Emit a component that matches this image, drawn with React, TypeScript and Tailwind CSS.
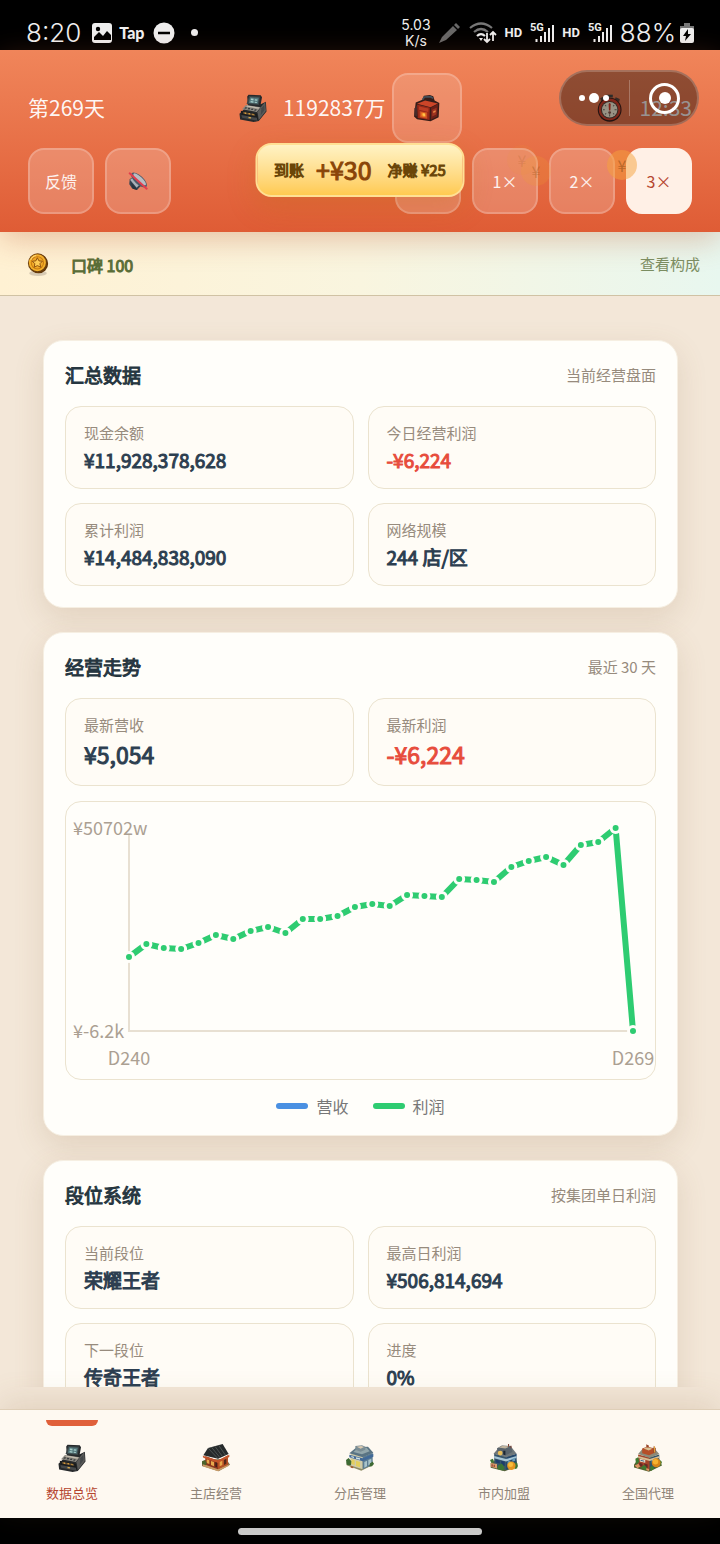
import React from "react";

interface IconProps {
  className?: string;
}

interface StatProps {
  label: string;
  value: string;
  negative?: boolean;
  large?: boolean;
}

const RegisterIcon = ({ className }: IconProps) => (
  <svg viewBox="0 0 84 87" className={className} aria-hidden="true">
    <path d="M24 8l4-6 38 2 4 6-4 22 16-8 2 30-24 30-16 3-42-8-2-18 14-14 12-10z" fill="#26292b" />
    <path d="M30 6l34 2-4 26-38-3z" fill="#3b4648" />
    <path d="M33 10l27 2-3 18-28-2z" fill="#54777c" />
    <path d="M36 14l8 1-1 5-8-1zM48 16l8 1-1 4-8-1zM35 22l9 1-1 4-9-1zM48 24l6 1v3l-7-1z" fill="#a9d0cb" />
    <path d="M20 34l46 7-12 15-46-9z" fill="#8d8980" />
    <path d="M24 36l38 6-3 4-38-7z" fill="#c5beb0" />
    <path d="M18 41l6 1-3 4-6-1zM28 43l6 1-3 4-6-1zM38 45l6 1-3 4-6-1zM48 47l6 1-3 4-6-1z" fill="#34383a" />
    <path d="M66 41l14-16 2 28-22 28-4-24z" fill="#5c5c5a" />
    <path d="M68 44l9-10 1 16-12 16z" fill="#44484a" />
    <path d="M4 52l50 9 4 20-50-8z" fill="#1a1c1d" />
    <path d="M10 55l38 7 1 6-37-7z" fill="#5c4a31" />
    <path d="M16 57l5 1v4l-5-1zM28 59l5 1v4l-5-1zM40 61l4 1v4l-4-1z" fill="#e0a23e" />
    <path d="M6 65l48 9 2 9-48-9z" fill="#45484a" />
    <path d="M28 71l8 1v4l-8-1z" fill="#d6a94b" />
  </svg>
);

const BagIcon = ({ className }: IconProps) => (
  <svg viewBox="0 0 80 80" className={className} aria-hidden="true">
    <path d="M8 22l20-8 4-12 18-2 10 4 4 12 14 8-2 42-24 12-40-6-9-8z" fill="#351c18" />
    <path d="M28 14l6-8 18-1 8 5" fill="none" stroke="#44505a" strokeWidth="5" />
    <path d="M12 26l24-10 38 9-22 11z" fill="#cc4528" />
    <path d="M12 28l38 9-1 37-35-6z" fill="#962818" />
    <path d="M53 38l21-11-2 37-19 9z" fill="#6c2018" />
    <path d="M18 34l28 6-1 10-27-6z" fill="#bd3d24" />
    <path d="M20 48l22 4v18l-22-4z" fill="#cf5222" />
    <path d="M25 52l12 2v11l-12-2z" fill="#f58a25" />
    <path d="M28 56l5-3 4 7-5 4z" fill="#ffc64f" />
    <path d="M57 44l13-6-1 20-12 6z" fill="#9f3321" />
    <path d="M60 48l7-3v5l-7 3z" fill="#e98645" />
    <path d="M4 40l8-10v34l-8-4z" fill="#462b2a" />
  </svg>
);

const StopwatchIcon = ({ className }: IconProps) => (
  <svg viewBox="0 0 80 80" className={className} aria-hidden="true">
    <path d="M30 2h18v8H30z" fill="#4a4a46" />
    <path d="M12 12l10-5 6 6-12 9zM56 9l12 5-2 9-12-7z" fill="#5a4640" />
    <circle cx="39" cy="45" r="34" fill="#38201c" />
    <circle cx="39" cy="44" r="31" fill="#d8402c" />
    <circle cx="39" cy="45" r="25" fill="#5a453c" />
    <circle cx="39" cy="45" r="22" fill="#fdf3dd" />
    <path d="M39 26v5M39 58v6M20 45h5M53 45h6M26 32l3 3M52 32l-3 3M26 58l3-3M52 58l-3-3" stroke="#77706a" strokeWidth="3" />
    <path d="M36 28h6l-1 19h-4z" fill="#e03626" />
    <circle cx="39" cy="53" r="4" fill="#8a5a50" />
  </svg>
);

const MutedIcon = ({ className }: IconProps) => (
  <svg viewBox="0 0 60 60" className={className} aria-hidden="true">
    <path d="M5 24l10-4 26 22-14 15-15-5-8-12z" fill="#35424f" />
    <path d="M6 26l8-5 20 20-8 9z" fill="#a9b1b8" />
    <path d="M9 35l15 15 5 7-15-4z" fill="#28343f" />
    <ellipse cx="33" cy="27" rx="30" ry="13" transform="rotate(43 33 27)" fill="#4f5b69" />
    <ellipse cx="35" cy="25" rx="25" ry="8" transform="rotate(43 35 25)" fill="#b9bdc3" />
    <path d="M5 7l51 46" stroke="#e33d4d" strokeWidth="6" strokeLinecap="round" />
  </svg>
);

const CoinIcon = ({ className }: IconProps) => (
  <svg viewBox="0 0 66 76" className={className} aria-hidden="true">
    <ellipse cx="33" cy="64" rx="28" ry="9" fill="#b7a997" opacity=".55" />
    <circle cx="35" cy="34" r="30" fill="#5c340b" />
    <circle cx="32" cy="32" r="31" fill="#6b3f0d" />
    <circle cx="31" cy="31" r="27" fill="#f5b32c" />
    <circle cx="31" cy="31" r="21" fill="#c97b12" />
    <circle cx="31" cy="31" r="18" fill="#f0aa28" />
    <path d="M31 15l5 10 11 1-8 8 3 11-11-5-10 5 2-11-8-8 11-1z" fill="#ffce55" stroke="#8c4d0c" strokeWidth="3" />
    <path d="M10 22c3-8 9-13 17-14" fill="none" stroke="#ffe28a" strokeWidth="3" />
  </svg>
);

const MainShopIcon = ({ className }: IconProps) => (
  <svg viewBox="0 0 84 84" className={className} aria-hidden="true">
    <path d="M0 60l10-12 62-4 12 18-34 20-50-16z" fill="#7c6a45" />
    <path d="M4 58l46 16 30-13v5L48 82 2 67z" fill="#c99c68" />
    <path d="M10 36l38 14v26L10 62z" fill="#8c351c" />
    <path d="M48 50l30-16v28L48 76z" fill="#b65024" />
    <path d="M4 34l14-22 44-12 18 30-32 14z" fill="#262a2b" />
    <path d="M18 12l30 32M28 9l26 32M39 7l22 30M50 4l20 29" stroke="#4e5452" strokeWidth="3" />
    <path d="M2 35l46 14 34-17v7L48 57 4 41z" fill="#c4552a" />
    <path d="M14 46l8 3v11l-8-3zM27 51l9 3v13l-9-4zM53 54l8-4v13l-8 4z" fill="#e8a94c" />
    <path d="M66 48l7-4v15l-7 4z" fill="#54281b" />
    <path d="M40 54l5 2v14l-5-2z" fill="#43211a" />
    <path d="M0 52l8-4 6 8-2 8-12-4z" fill="#4c642b" />
  </svg>
);

const BranchIcon = ({ className }: IconProps) => (
  <svg viewBox="0 0 84 80" className={className} aria-hidden="true">
    <path d="M2 52l20-8 56 2 4 14-36 18L2 62z" fill="#8d8c66" />
    <path d="M14 26l36 10v38L12 62z" fill="#d0cba8" />
    <path d="M50 36l30-12v36L50 74z" fill="#5c7d94" />
    <path d="M10 26l22-18 34-2 16 18-32 14z" fill="#5a7483" />
    <path d="M22 22l14-12 26-1 9 11-23 9z" fill="#93a7ab" />
    <path d="M28 4l20-2 10 4v9l-14 6-16-6z" fill="#7a8d94" />
    <path d="M32 6l14-2 8 3-10 5z" fill="#d9c9b1" />
    <path d="M10 30l40 11 32-14v9L50 50 10 38z" fill="#426a98" />
    <path d="M16 34l8 2v4l-8-2zM30 38l12 3v4l-12-3z" fill="#cfe2e8" />
    <path d="M16 44l10 3v14l-10-3zM30 48l12 4v16l-12-4z" fill="#e3cf5c" />
    <path d="M55 52l8-4v17l-8 4zM67 46l9-4v16l-9 4z" fill="#a9c4ca" />
    <path d="M0 46l8-6 8 10-1 12-13-2zM72 56l8-5 4 6-6 8-8 1z" fill="#3e6a33" />
    <path d="M14 64l8 2v5l-8-2z" fill="#a95b2a" />
  </svg>
);

const CityIcon = ({ className }: IconProps) => (
  <svg viewBox="0 0 80 80" className={className} aria-hidden="true">
    <path d="M2 54l16-8 56-4 6 22-38 14L2 68z" fill="#54603b" />
    <path d="M12 28l34 8v38L12 64z" fill="#38566a" />
    <path d="M46 36l30-8v34L46 74z" fill="#24476b" />
    <path d="M10 28l14-16 38-2 14 18-30 10z" fill="#6f777a" />
    <path d="M20 12l14-8 26 2 4 17-20 9-22-6z" fill="#59646c" />
    <path d="M24 10l12-5 20 2-12 6z" fill="#c1b49c" />
    <path d="M53 8V0M60 12V5" stroke="#7c3e30" strokeWidth="3" />
    <circle cx="29" cy="26" r="7" fill="#e7bd59" />
    <path d="M38 19h6v13l-6-2z" fill="#1b2633" />
    <path d="M12 34l34 9 30-9v6l-30 10-34-9z" fill="#a7c6d6" />
    <path d="M16 44l12 3v9l-12-3zM32 48l10 3v12l-10-3z" fill="#1d3c6d" />
    <path d="M50 50l8-3v11l-8 3zM64 42l8-3v9l-8 3z" fill="#659ab6" />
    <path d="M2 54l18 3v13L2 65z" fill="#da9d6e" />
    <path d="M6 58v7M12 59v7" stroke="#88372d" strokeWidth="3" />
    <path d="M22 62l12-6 8 12-5 8-15-4zM0 46l8-4 4 8-8 4zM70 52l8 3v14l-8 3z" fill="#3c7635" />
    <circle cx="61" cy="62" r="12" fill="#e39420" />
    <circle cx="59" cy="59" r="7" fill="#f8bd3c" />
  </svg>
);

const NationIcon = ({ className }: IconProps) => (
  <svg viewBox="0 0 82 80" className={className} aria-hidden="true">
    <path d="M0 60l14-20 56-4 12 26-38 18L0 68z" fill="#54612f" />
    <path d="M12 30l34 8v38L12 64z" fill="#a4432a" />
    <path d="M46 38l28-8v32L46 76z" fill="#31546a" />
    <path d="M12 28l14-16 32-2 16 18-28 12z" fill="#8b8a79" />
    <path d="M24 12l16-6 18 6v14l-14 6-20-6z" fill="#b54e28" />
    <path d="M28 12l12-4 14 5-11 5z" fill="#d9c194" />
    <path d="M36 0l8 4-2 6-6-2zM58 4l6 8-2 14-6-2z" fill="#974325" />
    <path d="M60 6v18" stroke="#e3a13b" strokeWidth="3" />
    <path d="M12 34l34 9 28-9v6l-28 9-34-9z" fill="#d6bd92" />
    <path d="M17 42l16 4v8l-16-4z" fill="#f0e3cd" />
    <path d="M19 45l11 3v3l-11-3z" fill="#3d6680" />
    <path d="M16 54l9 3v9l-9-3zM30 56l10 3v11l-10-3z" fill="#662a24" />
    <path d="M52 46l7-2v7l-7 2z" fill="#9bbac1" />
    <path d="M4 42l8-4 4 14-10 6zM20 68l10-8 8 8-4 8zM46 68l8-6 6 9-10 7zM74 44l8 8-4 10-6-4z" fill="#3f7a31" />
    <path d="M2 62l11-5 5 8-8 5zM36 70l8 2v6l-8-2z" fill="#dd9562" />
    <circle cx="65" cy="54" r="13" fill="#d98416" />
    <circle cx="63" cy="51" r="8" fill="#f7b22f" />
  </svg>
);

const SignalIcon = () => (
  <svg viewBox="0 0 24 22" className="h-[22px] w-6 overflow-visible" aria-hidden="true">
    <text x="0" y="9" fontSize="11" fontWeight="700" fill="#eee" className="font-[Roboto]">5G</text>
    <path d="M6.500 17v3M11 14v6M15 10v10M19 6v14M23 3v17" stroke="#eee" strokeWidth="2" />
  </svg>
);

const StatusBar = () => (
  <div className="flex h-[50px] items-center justify-between bg-black px-[26px] pt-[15px] font-[Roboto,sans-serif] text-[#f0f0f0]">
    <div className="flex items-center">
      <span className="font-[Inter] text-[26px] leading-8 font-light">8:20</span>
      <svg viewBox="0 0 22 22" className="ml-2.5 size-[22px]" aria-hidden="true">
        <rect x="1" y="1" width="20" height="20" rx="3" fill="#eee" />
        <circle cx="7" cy="7" r="2.200" fill="#000" />
        <path d="M3 18v-3l5-5 4 4 4-5 4 4v5z" fill="#000" />
      </svg>
      <span className="ml-1.5 font-[Lato] text-base leading-5 font-black">Tap</span>
      <svg viewBox="0 0 22 22" className="ml-2 size-[22px]" aria-hidden="true">
        <circle cx="11" cy="11" r="10.500" fill="#eee" />
        <path d="M5 11h12" stroke="#000" strokeWidth="2.500" />
      </svg>
      <span className="ml-4 size-[7px] rounded-full bg-[#eee]" />
    </div>
    <div className="flex items-center gap-2">
      <div className="text-center font-[Inter] text-sm leading-4">
        <div>5.03</div>
        <div>K/s</div>
      </div>
      <svg viewBox="0 0 22 22" className="size-[22px]" fill="#686868" aria-hidden="true">
        <path d="M0 21l3-6L14 4l4 4L7 18zM15 3l2-2 4 4-2 2z" />
      </svg>
      <svg viewBox="0 0 28 22" className="h-[22px] w-7" fill="none" strokeWidth="2.200" aria-hidden="true">
        <path d="M1 6Q12-3 23 6M5 10q7-6 14 0" stroke="#777" />
        <path d="M8 14q4-4 8 0" stroke="#eee" />
        <path d="M10 16h4l-2 3z" fill="#eee" />
        <path d="M18 11v9m-3-3l3 3 3-3M24 19v-9m-3 3l3-3 3 3" stroke="#eee" strokeWidth="1.800" />
      </svg>
      <span className="text-[13px] font-bold">HD</span>
      <SignalIcon />
      <span className="text-[13px] font-bold">HD</span>
      <SignalIcon />
      <div className="flex items-center gap-1">
        <span className="font-[Inter] text-[26px] leading-8 font-light">88%</span>
        <svg viewBox="0 0 14 20" className="h-5 w-[14px]" aria-hidden="true">
          <path d="M4 0h6v3h4v4H0V3h4z" fill="#777" />
          <rect y="5" width="14" height="15" rx="2" fill="#eee" />
          <path d="M8 6l-5 7h3l-1 5 6-7H8z" fill="#000" />
        </svg>
      </div>
    </div>
  </div>
);

const headerButton =
  "flex size-[66px] items-center justify-center rounded-2xl border-2 border-white/20 bg-white/20 text-base text-white/90";

const FloatingCoin = ({ className }: IconProps) => (
  <span className={`absolute flex size-[30px] items-center justify-center rounded-full text-base ${className}`}>¥</span>
);

const GameHeader = () => (
  <header className="relative z-20 bg-linear-to-b from-[#f0855a] to-[#df5c35] px-7 pt-[23px] pb-[18px] shadow-[0_8px_28px_rgba(190,90,50,0.32)]">
    <div className="flex h-[70px] items-center justify-between text-[21px] text-white/95">
      <span>第269天</span>
      <div className="flex items-center">
        <RegisterIcon className="size-7" />
        <span className="mr-1.5 ml-4">1192837万</span>
        <button aria-label="背包" className="flex size-[70px] items-center justify-center rounded-2xl border-2 border-white/20 bg-white/15">
          <BagIcon className="size-[27px]" />
        </button>
      </div>
      <div className="flex items-center gap-4">
        <StopwatchIcon className="size-7" />
        <span>12:33</span>
      </div>
    </div>
    <div className="mt-[5px] flex justify-between">
      <div className="flex gap-[11px]">
        <button className={headerButton}>反馈</button>
        <button aria-label="静音" className={headerButton}>
          <MutedIcon className="size-5" />
        </button>
      </div>
      <div className="flex gap-[11px]">
        <button aria-label="暂停" className={headerButton} />
        <button className={headerButton}>1×</button>
        <button className={headerButton}>2×</button>
        <button className="flex size-[66px] items-center justify-center rounded-2xl bg-[#fff0e6] text-base text-[#b5452f]">3×</button>
      </div>
    </div>
    <FloatingCoin className="top-[95px] right-[183px] bg-[#f0a030]/10 text-[#a05a20]/20" />
    <FloatingCoin className="top-[106px] right-[169px] bg-[#f0a030]/20 text-[#a05a20]/40" />
    <FloatingCoin className="top-[100px] right-[83px] bg-[#f5a23c]/50 text-[#a05a20]/70" />
    <div className="absolute top-[93px] left-1/2 flex h-[54px] w-[209px] -translate-x-1/2 items-center justify-center rounded-2xl border-2 border-[#ffe094] bg-linear-to-b from-[#fff3c4] to-[#ffca50] text-[#6b4608] shadow-[0_10px_28px_rgba(190,110,20,0.28)]">
      <span className="text-[15px] [-webkit-text-stroke:1px]">到账</span>
      <span className="mx-3 text-[25px] text-[#8a4508] [-webkit-text-stroke:1px]">+¥30</span>
      <span className="ml-1 text-[15px] [-webkit-text-stroke:1px]">净赚 ¥25</span>
    </div>
    <div className="absolute top-5 right-[21px] flex h-14 w-[140px] items-center justify-between rounded-full border-2 border-white/20 bg-black/40 pr-[17px] pl-[18px]">
      <button aria-label="更多" className="flex items-center gap-1">
        <span className="size-1.5 rounded-full bg-white" />
        <span className="size-[10px] rounded-full bg-white" />
        <span className="size-1.5 rounded-full bg-white" />
      </button>
      <span className="h-9 w-px bg-white/25" />
      <button aria-label="关闭" className="flex size-[31px] items-center justify-center rounded-full border-3 border-white">
        <span className="size-3 rounded-full bg-white" />
      </button>
    </div>
  </header>
);

const Stat: React.FC<StatProps> = ({ label, value, negative, large }) => {
  const color = negative ? "text-[#e74c3c]" : "text-[#2c3e50]";
  return (
    <div className="rounded-2xl border border-[#ebe3cf] bg-[#fffcf6] px-[18px] pt-[13px] pb-[15px]">
      <div className="text-[15px] leading-[26px] text-[#978b7d]">{label}</div>
      <div
        className={`[-webkit-text-stroke:1px] ${color} ${
          large ? "text-[23px] leading-8" : "text-[19px] leading-[27px]"
        }`}
      >
        {value}
      </div>
    </div>
  );
};

interface CardProps {
  title: string;
  note: string;
  children: React.ReactNode;
}

const Card: React.FC<CardProps> = ({ title, note, children }) => (
  <section className="rounded-[20px] border border-[#f6efe2] bg-[#fffefa] p-[21px] shadow-[0_10px_30px_rgba(139,100,60,0.16)]">
    <div className="mb-[17px] flex h-[27px] items-center justify-between">
      <h2 className="text-[19px] text-[#263640] [-webkit-text-stroke:1px]">{title}</h2>
      <span className="text-[15px] text-[#978b7d]">{note}</span>
    </div>
    {children}
  </section>
);

const profit = [
  155, 142, 146, 147, 141, 133, 137, 129, 125, 131, 117, 117, 114, 105, 102,
  104, 93, 94, 95, 77, 78, 80, 65, 59, 55, 63, 43, 40, 26, 229,
];

const TrendChart = () => {
  const points = profit.map((y, i) => ({ x: 63 + (i * 504) / 29, y }));
  return (
    <svg viewBox="0 0 589 277" className="block h-auto w-full" role="img" aria-label="利润走势">
      <path d="M63 32v197h504" fill="none" stroke="#e8e0d2" strokeWidth="2" />
      <polyline points={points.map((p) => `${p.x},${p.y}`).join(" ")} fill="none" stroke="#2ecc71" strokeWidth="6" strokeLinejoin="round" />
      {points.map((p) => (
        <circle key={p.x} cx={p.x} cy={p.y} r="4.500" fill="#2ecc71" stroke="#fffefa" strokeWidth="3" />
      ))}
      <g fontSize="18" fill="#aba092">
        <text x="7" y="33">¥50702w</text>
        <text x="7" y="236">¥-6.2k</text>
        <text x="63" y="263" textAnchor="middle">D240</text>
        <text x="567" y="263" textAnchor="middle">D269</text>
      </g>
    </svg>
  );
};

const tabs = [
  { name: "数据总览", Icon: RegisterIcon },
  { name: "主店经营", Icon: MainShopIcon },
  { name: "分店管理", Icon: BranchIcon },
  { name: "市内加盟", Icon: CityIcon },
  { name: "全国代理", Icon: NationIcon },
];

const TabBar = () => (
  <nav className="relative z-10 grid grid-cols-5 border-t border-[#dfcfb8] bg-[#fef9f1] pt-[10px] pb-[15px] shadow-[0_-8px_30px_rgba(139,100,60,0.16)]">
    {tabs.map(({ name, Icon }, i) => (
      <button key={name} className="flex flex-col items-center">
        <span className={`h-1.5 w-[52px] rounded-b-lg ${i === 0 ? "bg-[#e0603a]" : ""}`} />
        <Icon className="mt-[18px] size-7" />
        <span className={`mt-[11px] text-[13px] leading-5 ${i === 0 ? "text-[#b5452f]" : "text-[#8f8478]"}`}>
          {name}
        </span>
      </button>
    ))}
  </nav>
);

export default function App() {
  return (
    <div className="flex h-screen flex-col bg-[#f3e7d8] font-['Noto_Sans_CJK_SC',sans-serif]">
      <StatusBar />
      <GameHeader />
      <div className="flex h-16 shrink-0 items-center border-b border-[#d0c2a4] bg-linear-to-r from-[#fff1d3] via-[#f9f5df] to-[#e8f7ef] pt-0.5 pr-5 pl-[27px]">
        <CoinIcon className="h-6 w-[22px]" />
        <span className="ml-[22px] text-base text-[#5a6e38] [-webkit-text-stroke:1px]">口碑 100</span>
        <button className="ml-auto text-[15px] text-[#7b8e62]">查看构成</button>
      </div>

      <main className="mb-[22px] flex min-h-0 flex-1 flex-col gap-6 overflow-hidden pt-11 pr-[42px] pl-[43px]">
        <Card title="汇总数据" note="当前经营盘面">
          <div className="grid grid-cols-2 gap-[14px]">
            <Stat label="现金余额" value="¥11,928,378,628" />
            <Stat label="今日经营利润" value="-¥6,224" negative />
            <Stat label="累计利润" value="¥14,484,838,090" />
            <Stat label="网络规模" value="244 店/区" />
          </div>
        </Card>

        <Card title="经营走势" note="最近 30 天">
          <div className="grid grid-cols-2 gap-[14px]">
            <Stat label="最新营收" value="¥5,054" large />
            <Stat label="最新利润" value="-¥6,224" negative large />
          </div>
          <div className="mt-[15px] rounded-2xl border border-[#ebe3cf]">
            <TrendChart />
          </div>
          <div className="mt-[18px] flex justify-center gap-6 text-base leading-4 text-[#777]">
            <span className="flex items-center gap-2">
              <i className="h-1.5 w-8 rounded-full bg-[#4a90e2]" />
              营收
            </span>
            <span className="flex items-center gap-2">
              <i className="h-1.5 w-8 rounded-full bg-[#2ecc71]" />
              利润
            </span>
          </div>
        </Card>

        <Card title="段位系统" note="按集团单日利润">
          <div className="grid grid-cols-2 gap-[14px]">
            <Stat label="当前段位" value="荣耀王者" />
            <Stat label="最高日利润" value="¥506,814,694" />
            <Stat label="下一段位" value="传奇王者" />
            <Stat label="进度" value="0%" />
          </div>
        </Card>
      </main>

      <TabBar />
      <div className="flex h-[26px] shrink-0 items-center justify-center bg-black">
        <span className="h-[7px] w-[244px] rounded-full bg-[#ccc]" />
      </div>
    </div>
  );
}
